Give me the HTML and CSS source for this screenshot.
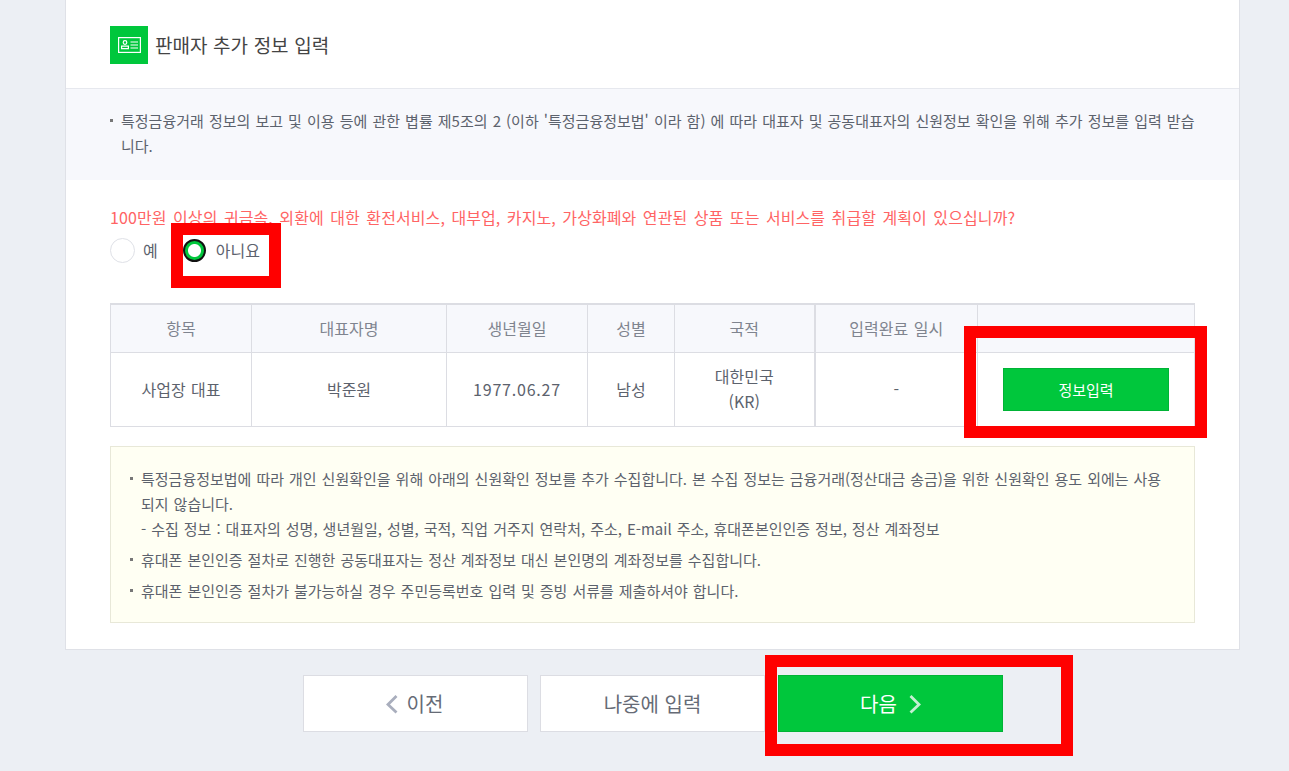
FILE: index.html
```html
<!DOCTYPE html>
<html lang="ko">
<head>
  <meta charset="UTF-8">
  <title>판매자 추가 정보 입력</title>
  <link rel="stylesheet" href="styles.css">
</head>
<body>
  <div class="wrap">
    <section class="card">
      <div class="card-hd">
        <span class="hd-icon">
          <svg width="23" height="16" viewBox="0 0 23 16" fill="none" stroke="#fff" stroke-width="1.2">
            <rect x="0.6" y="0.6" width="21.800" height="14.800"/>
            <circle cx="7" cy="5.500" r="1.800"/>
            <path d="M3.600 11.600v-2.400h6.800v2.400z"/>
            <path d="M12.500 5h7.500M12.500 8h7.500M12.500 11h7.500"/>
          </svg>
        </span>
        <h2 class="hd-title">판매자 추가 정보 입력</h2>
      </div>

      <div class="notice">
        <ul class="dot-list">
          <li>특정금융거래 정보의 보고 및 이용 등에 관한 볍률 제5조의 2 (이하 '특정금융정보법' 이라 함) 에 따라 대표자 및 공동대표자의 신원정보 확인을 위해 추가 정보를 입력 받습니다.</li>
        </ul>
      </div>

      <div class="card-bd">
        <p class="question">100만원 이상의 귀금속, 외환에 대한 환전서비스, 대부업, 카지노, 가상화폐와 연관된 상품 또는 서비스를 취급할 계획이 있으십니까?</p>
        <div class="radios">
          <label class="radio"><span class="radio-mark"></span>예</label>
          <label class="radio"><span class="radio-mark on"></span>아니요</label>
        </div>

        <table class="info-table">
          <colgroup>
            <col class="c1"><col class="c2"><col class="c3"><col class="c4"><col class="c5"><col class="c6"><col class="c7">
          </colgroup>
          <thead>
            <tr>
              <th>항목</th>
              <th>대표자명</th>
              <th>생년월일</th>
              <th>성별</th>
              <th>국적</th>
              <th class="thick">입력완료 일시</th>
              <th></th>
            </tr>
          </thead>
          <tbody>
            <tr>
              <td>사업장 대표</td>
              <td>박준원</td>
              <td class="num">1977.06.27</td>
              <td>남성</td>
              <td>대한민국<br>(KR)</td>
              <td class="thick">-</td>
              <td><button class="btn-input">정보입력</button></td>
            </tr>
          </tbody>
        </table>

        <div class="guide">
          <ul class="dot-list">
            <li>특정금융정보법에 따라 개인 신원확인을 위해 아래의 신원확인 정보를 추가 수집합니다. 본 수집 정보는 금융거래(정산대금 송금)을 위한 신원확인 용도 외에는 사용되지 않습니다.<br>- 수집 정보 : 대표자의 성명, 생년월일, 성별, 국적, 직업 거주지 연락처, 주소, E-mail 주소, 휴대폰본인인증 정보, 정산 계좌정보</li>
            <li>휴대폰 본인인증 절차로 진행한 공동대표자는 정산 계좌정보 대신 본인명의 계좌정보를 수집합니다.</li>
            <li>휴대폰 본인인증 절차가 불가능하실 경우 주민등록번호 입력 및 증빙 서류를 제출하셔야 합니다.</li>
          </ul>
        </div>
      </div>
    </section>

    <div class="btn-row">
      <button class="btn btn-prev">
        <svg class="arrow" width="12" height="20" viewBox="0 0 12 20" fill="none" stroke="#a9aebd" stroke-width="2.800"><path d="M10.500 2L2 10.500l8.500 8"/></svg>
        이전
      </button>
      <button class="btn">나중에 입력</button>
      <button class="btn btn-green">
        다음
        <svg class="arrow" width="12" height="20" viewBox="0 0 12 20" fill="none" stroke="#c4efd2" stroke-width="2.800"><path d="M1.500 2l8.500 8.500-8.500 8"/></svg>
      </button>
    </div>
  </div>

  <div class="mark mark-radio"></div>
  <div class="mark mark-input"></div>
  <div class="mark mark-next"></div>
</body>
</html>
```

FILE: styles.css
```css
*{
  margin: 0;
  padding: 0;
  box-sizing: border-box;
  font-family: "Noto Sans CJK KR", "Noto Sans", sans-serif;
}

html, body{
  height: 771px;
  overflow: hidden;
}

body{
  background: #eceff4;
  color: #5c626d;
}

.wrap{
  width: 1175px;
  margin-left: 65px;
}

.card{
  background: #fff;
  border: 1px solid #dfe1e7;
  border-top: none;
  height: 650px;
}

.card-hd{
  display: flex;
  align-items: center;
  gap: 7px;
  height: 89px;
  padding: 1px 44px 0;
  border-bottom: 1px solid #e6e8ee;
}

.hd-icon{
  width: 38px;
  height: 38px;
  background: #00c73c;
  display: flex;
  align-items: center;
  justify-content: center;
}

.hd-title{
  font-size: 19px;
  font-weight: 400;
  word-spacing: 0.3px;
  color: #444;
}

.notice{
  height: 91px;
  background: #f7f8fc;
  padding: 19px 44px 0;
}

.dot-list{
  list-style: none;
  font-size: 15px;
  line-height: 25px;
  word-spacing: 0.8px;
}

.notice .dot-list{
  word-spacing: 0.9px;
}

.dot-list li{
  position: relative;
  padding-left: 11px;
}

.dot-list li::before{
  content: "";
  position: absolute;
  left: 0;
  top: 11px;
  width: 3px;
  height: 3px;
  background: #777;
}

.card-bd{
  padding: 24px 44px 0;
}

.question{
  font-size: 16px;
  line-height: 26px;
  letter-spacing: 0.1px;
  word-spacing: 1.85px;
  color: #ff6464;
}

.radios{
  display: flex;
  gap: 25px;
  margin-top: 7px;
  height: 26px;
}

.radio{
  display: flex;
  align-items: center;
  gap: 8px;
  font-size: 16px;
}

.radio-mark{
  width: 25px;
  height: 25px;
  border: 1px solid #dfe1e7;
  border-radius: 50%;
  background: #fff;
}

.radio-mark.on{
  width: 23px;
  height: 23px;
  margin-right: 2px;
  border: 2px solid #111;
  background: radial-gradient(circle, #fff 0 6px, #00c73c 7px);
}

.info-table{
  width: 1084px;
  height: 124px;
  margin-top: 40px;
  border-collapse: collapse;
  table-layout: fixed;
  border-top: 2px solid #dcdde3;
  border-right: 1px solid #dcdde3;
  border-left: 1px solid #dcdde3;
}

.c1{ width: 141px; }
.c2{ width: 195px; }
.c3{ width: 141px; }
.c4{ width: 87px; }
.c5{ width: 140px; }
.c6{ width: 163px; }
.c7{ width: 217px; }

.info-table th,
.info-table td{
  border: 1px solid #dcdde3;
  text-align: center;
  font-size: 16px;
  font-weight: 400;
  line-height: 25px;
  word-spacing: 1px;
}

.info-table th{
  height: 48px;
  background: #f7f8fc;
  color: #7f848f;
}

.info-table td{
  height: 74px;
  color: #5c626d;
}

.info-table .num{
  letter-spacing: 0.8px;
}

.info-table .thick{
  border-left: 2px solid #dcdde3;
}

.btn-input{
  width: 166px;
  height: 43px;
  background: #00c73c;
  border: 1px solid #00b336;
  color: #fff;
  font-size: 15px;
}

.guide{
  height: 177px;
  margin-top: 19px;
  padding: 19px 26px 0 19px;
  background: #fffff3;
  border: 1px solid #e8e8d8;
}

.guide li + li{
  margin-top: 6px;
}

.btn-row{
  display: flex;
  gap: 12px;
  margin-top: 25px;
  padding-left: 238px;
}

.btn{
  display: flex;
  align-items: center;
  justify-content: center;
  gap: 9px;
  width: 225px;
  height: 57px;
  background: #fff;
  border: 1px solid #dcdde3;
  color: #666b76;
  font-size: 20px;
}

.btn-prev{
  padding-right: 2px;
}

.btn-green{
  gap: 12px;
  margin-left: 1px;
  background: #00c73c;
  border-color: #00b336;
  color: #fff;
}

/* red annotation boxes drawn over the screenshot */
.mark{
  position: absolute;
  border: 12px solid #f00;
}

.mark-radio{
  left: 171px;
  top: 223px;
  width: 110px;
  height: 65px;
}

.mark-input{
  left: 964px;
  top: 326px;
  width: 243px;
  height: 112px;
}

.mark-next{
  left: 765px;
  top: 655px;
  width: 308px;
  height: 101px;
}
```
